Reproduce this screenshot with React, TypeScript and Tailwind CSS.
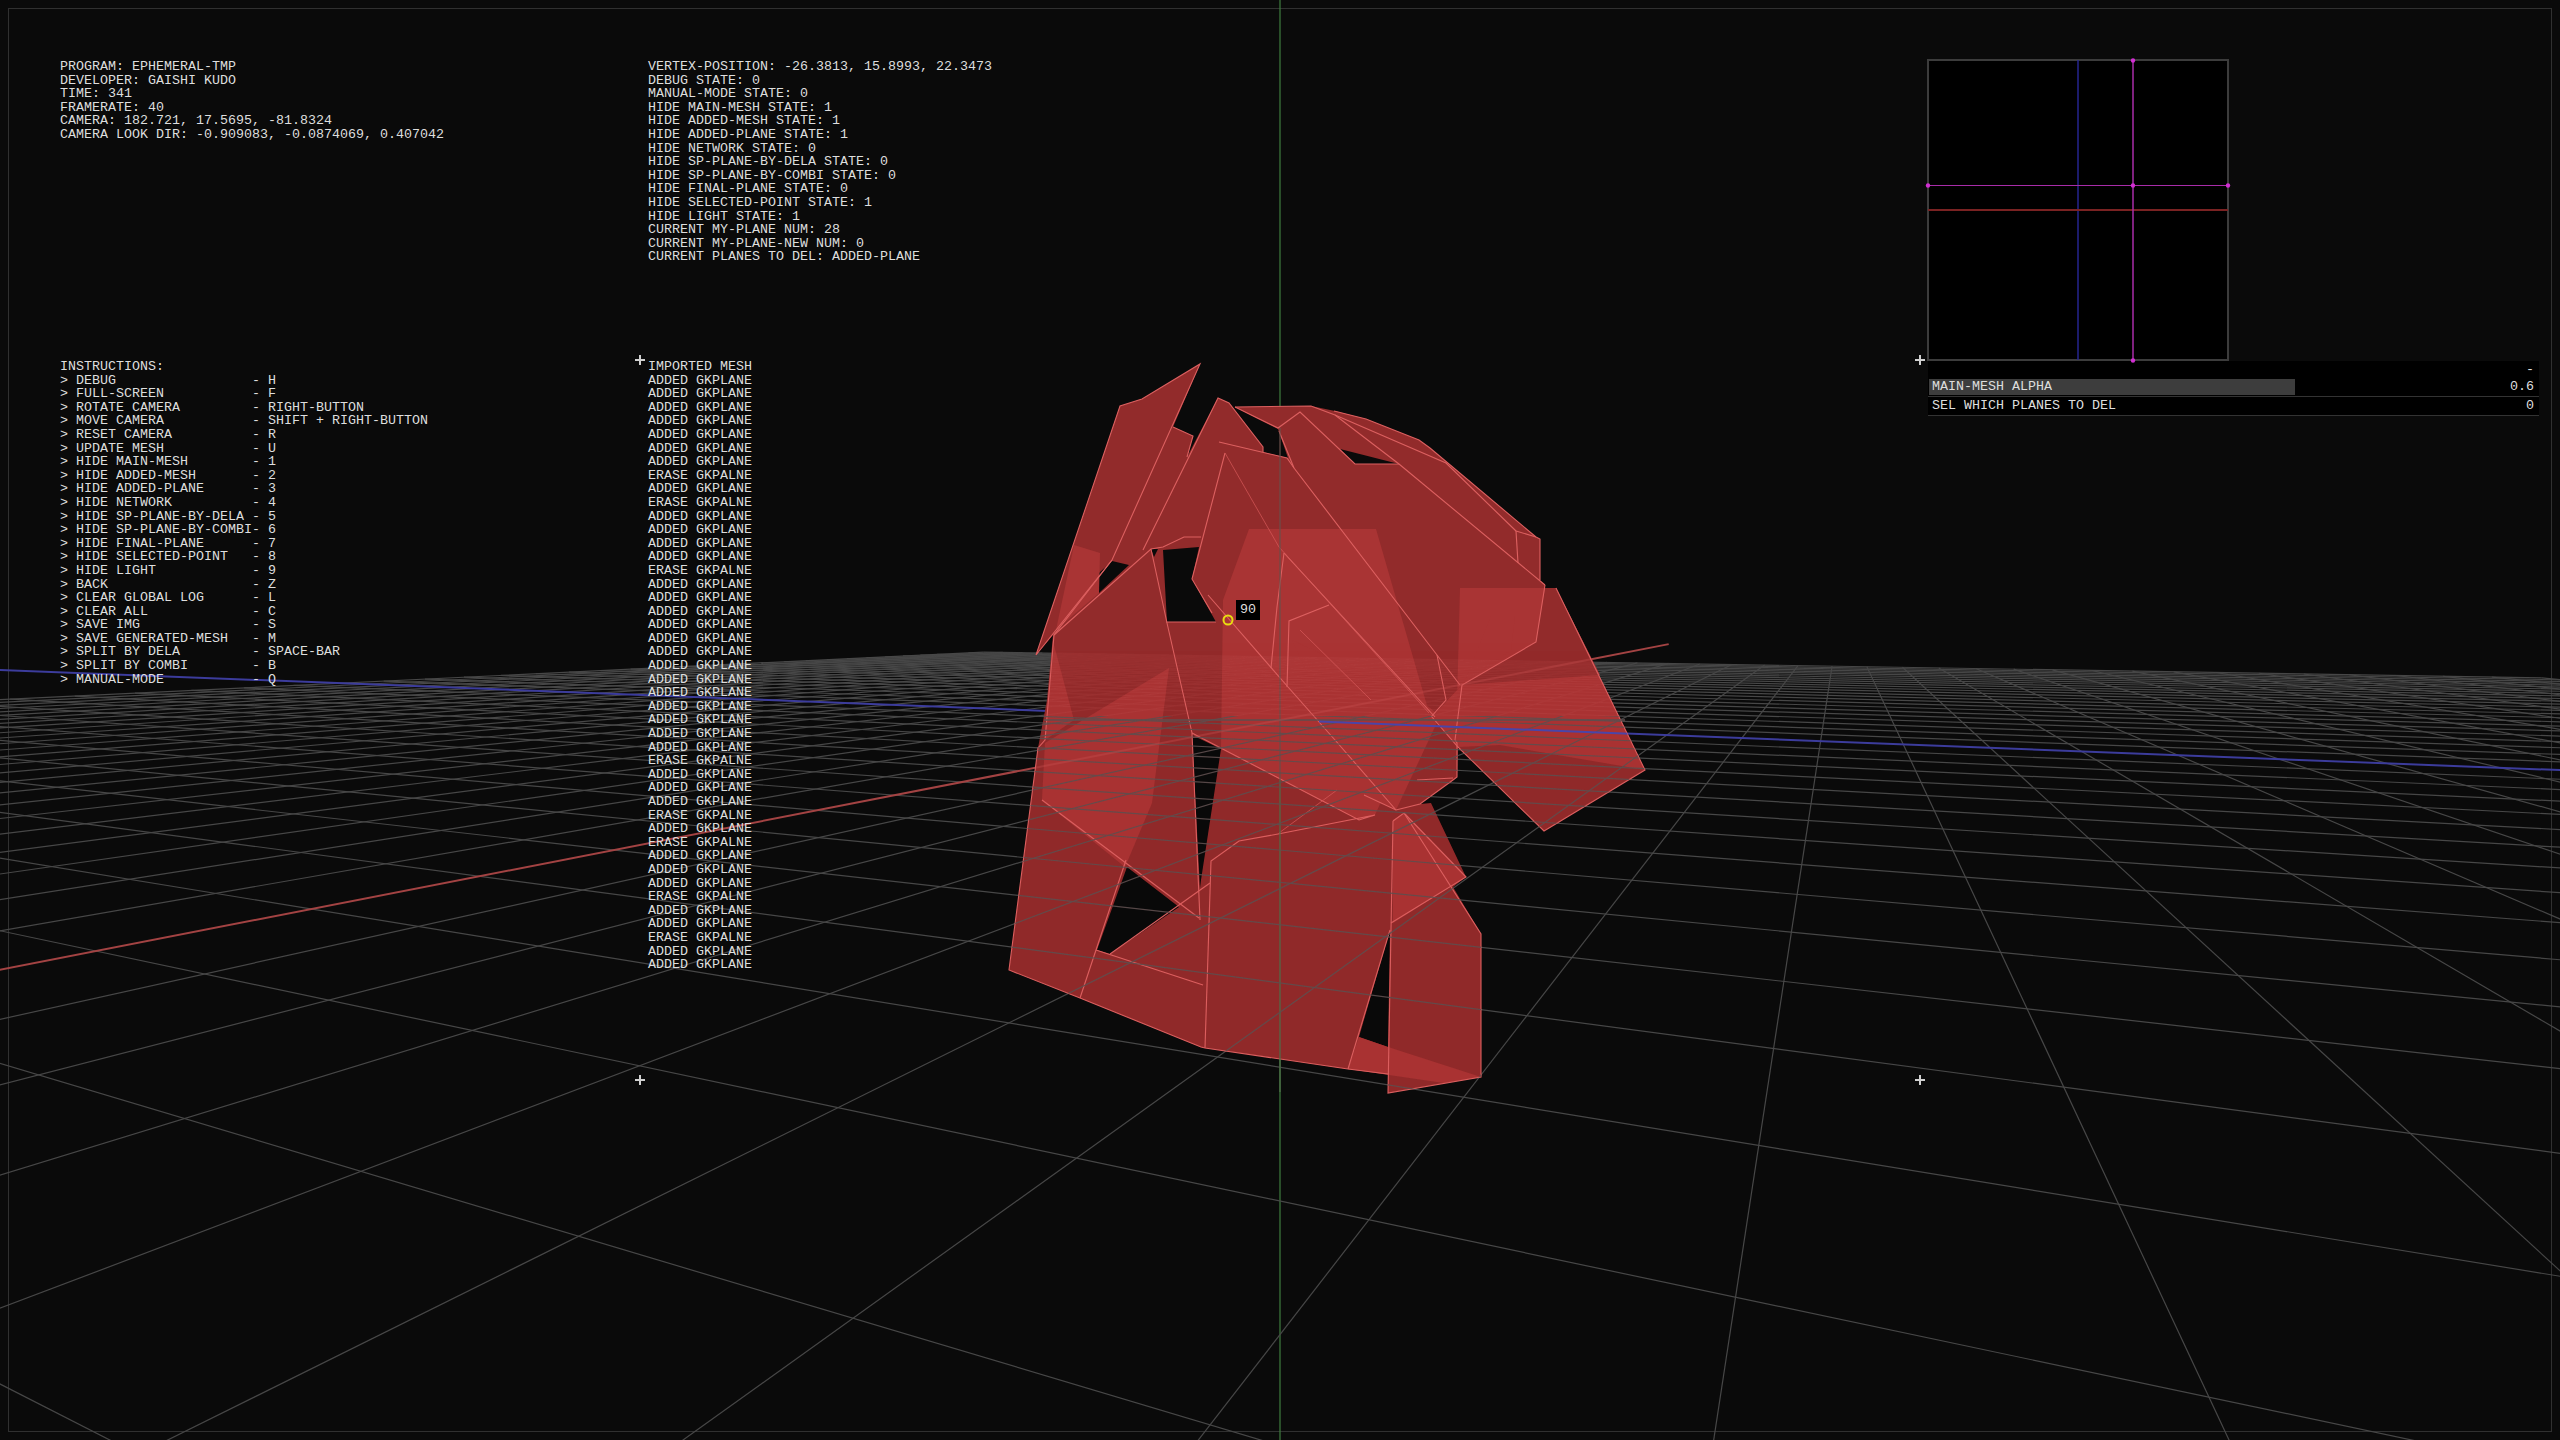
// viewer screen for the ephemeral-tmp mesh tool
const FONT = "font-['Liberation_Mono',monospace]";

const debugInfo = [
  'PROGRAM: EPHEMERAL-TMP',
  'DEVELOPER: GAISHI KUDO',
  'TIME: 341',
  'FRAMERATE: 40',
  'CAMERA: 182.721, 17.5695, -81.8324',
  'CAMERA LOOK DIR: -0.909083, -0.0874069, 0.407042',
];

const stateInfo = [
  'VERTEX-POSITION: -26.3813, 15.8993, 22.3473',
  'DEBUG STATE: 0',
  'MANUAL-MODE STATE: 0',
  'HIDE MAIN-MESH STATE: 1',
  'HIDE ADDED-MESH STATE: 1',
  'HIDE ADDED-PLANE STATE: 1',
  'HIDE NETWORK STATE: 0',
  'HIDE SP-PLANE-BY-DELA STATE: 0',
  'HIDE SP-PLANE-BY-COMBI STATE: 0',
  'HIDE FINAL-PLANE STATE: 0',
  'HIDE SELECTED-POINT STATE: 1',
  'HIDE LIGHT STATE: 1',
  'CURRENT MY-PLANE NUM: 28',
  'CURRENT MY-PLANE-NEW NUM: 0',
  'CURRENT PLANES TO DEL: ADDED-PLANE',
];

const instructions: [string, string][] = [
  ['DEBUG', 'H'],
  ['FULL-SCREEN', 'F'],
  ['ROTATE CAMERA', 'RIGHT-BUTTON'],
  ['MOVE CAMERA', 'SHIFT + RIGHT-BUTTON'],
  ['RESET CAMERA', 'R'],
  ['UPDATE MESH', 'U'],
  ['HIDE MAIN-MESH', '1'],
  ['HIDE ADDED-MESH', '2'],
  ['HIDE ADDED-PLANE', '3'],
  ['HIDE NETWORK', '4'],
  ['HIDE SP-PLANE-BY-DELA', '5'],
  ['HIDE SP-PLANE-BY-COMBI', '6'],
  ['HIDE FINAL-PLANE', '7'],
  ['HIDE SELECTED-POINT', '8'],
  ['HIDE LIGHT', '9'],
  ['BACK', 'Z'],
  ['CLEAR GLOBAL LOG', 'L'],
  ['CLEAR ALL', 'C'],
  ['SAVE IMG', 'S'],
  ['SAVE GENERATED-MESH', 'M'],
  ['SPLIT BY DELA', 'SPACE-BAR'],
  ['SPLIT BY COMBI', 'B'],
  ['MANUAL-MODE', 'Q'],
];

const erased = [8, 10, 15, 29, 33, 35, 39, 42];
const logLines = Array.from({ length: 45 }, (_, i) => {
  if (i === 0) return 'IMPORTED MESH';
  return erased.includes(i) ? 'ERASE GKPALNE' : 'ADDED GKPLANE';
});

// camera values are the ones printed in the debug text
type V3 = [number, number, number];
const cam: V3 = [182.721, 17.5695, -81.8324];
const fwd: V3 = [-0.909083, -0.0874069, 0.407042];
const rl = Math.hypot(fwd[2], fwd[0]);
const right: V3 = [-fwd[2] / rl, 0, fwd[0] / rl];
const up: V3 = [
  right[1] * fwd[2] - right[2] * fwd[1],
  right[2] * fwd[0] - right[0] * fwd[2],
  right[0] * fwd[1] - right[1] * fwd[0],
];
const FOCAL = 720 / Math.tan(Math.PI / 6);
const dot = (a: V3, b: V3) => a[0] * b[0] + a[1] * b[1] + a[2] * b[2];
const sub = (a: V3, b: V3): V3 => [a[0] - b[0], a[1] - b[1], a[2] - b[2]];

function segment(a: V3, b: V3) {
  let pa = sub(a, cam);
  let pb = sub(b, cam);
  const da = dot(pa, fwd);
  const db = dot(pb, fwd);
  const near = 1;
  if (da < near && db < near) return null;
  const cut = (p: V3, q: V3, dp: number, dq: number): V3 => {
    const t = (near - dp) / (dq - dp);
    return [p[0] + (q[0] - p[0]) * t, p[1] + (q[1] - p[1]) * t, p[2] + (q[2] - p[2]) * t];
  };
  if (da < near) pa = cut(pa, pb, da, db);
  if (db < near) pb = cut(pb, pa, db, da);
  const proj = (p: V3) => {
    const d = dot(p, fwd);
    return [1280 + (FOCAL * dot(p, right)) / d, 720 - (FOCAL * dot(p, up)) / d];
  };
  const [x1, y1] = proj(pa);
  const [x2, y2] = proj(pb);
  return { x1, y1, x2, y2 };
}

const STEP = 10;
const SIZE = 250;
const gridLines: { x1: number; y1: number; x2: number; y2: number }[] = [];
for (let v = -SIZE; v <= SIZE; v += STEP) {
  if (v === 0) continue;
  const s1 = segment([v, 0, -SIZE], [v, 0, SIZE]);
  const s2 = segment([-SIZE, 0, v], [SIZE, 0, v]);
  if (s1) gridLines.push(s1);
  if (s2) gridLines.push(s2);
}
const axisX = segment([-500, 0, 0], [500, 0, 0])!;
const axisZ = segment([0, 0, -500], [0, 0, 500])!;

const silhouette =
  '1036,655 1120,406 1142,399 1200,364 1173,427 1193,436 1187,457 1218,398 1229,403 1263,447 1263,452 1277,430 1235,407 1311,406 1335,411 1366,419 1419,440 1430,448 1536,537 1540,539 1540,580 1545,585 1545,588 1556,588 1645,770 1544,831 1458,747 1457,777 1453,780 1420,804 1431,803 1466,877 1453,887 1481,934 1481,1077 1388,1093 1388,1074 1348,1069 1205,1048 1201,1047 1080,998 1009,970 1038,748 1047,700 1053,635';

const holes = [
  '1163,550 1199,547 1192,579 1216,622 1167,622',
  '1112,561 1129,565 1099,593 1099,573',
  '1235,408 1278,429 1288,458 1263,452 1263,447',
  '1340,449 1355,464 1399,464',
  '1192,735 1221,749 1201,880 1200,888',
  '1127,867 1179,907 1110,954 1097,950',
  '1390,930 1359,1037 1388,1047',
  '1151,549 1158,549 1154,557',
];

const lightFaces = [
  '1249,529 1376,529 1430,716 1400,760 1375,815 1359,820 1221,749 1223,600',
  '1460,588 1545,588 1536,642 1462,685 1432,717 1456,740',
  '1491,616 1515,616 1511,650 1464,683',
  '1556,588 1645,770 1500,745 1458,747 1432,717 1462,685 1600,675',
  '1169,668 1152,803 1125,867 1042,800 1045,743',
  '1054,645 1074,720 1045,740',
  '1074,545 1100,553 1099,593 1056,630',
  '1404,813 1466,877 1393,923 1393,820',
  '1359,1037 1388,1047 1481,1077 1444,1083 1348,1069',
  '1292,640 1420,700 1440,716 1396,810 1364,795',
];

const edges = [
  '1036,655 1120,406 1142,399 1200,364 1112,560 1036,655',
  '1143,550 1218,398 1229,403 1263,447 1263,452',
  '1173,427 1193,436 1187,457',
  '1219,442 1287,458 1294,468 1437,655 1460,685',
  '1225,453 1192,579 1212,613',
  '1235,407 1311,406 1335,415 1399,464 1545,585',
  '1334,411 1366,419 1419,440 1430,448 1536,537 1540,539 1540,580',
  '1235,407 1278,428 1300,412 1355,464 1399,464',
  '1279,431 1294,468',
  '1516,531 1518,563',
  '1516,531 1536,537',
  '1335,415 1446,463 1516,531',
  '1054,635 1151,549 1163,547 1184,537 1201,537',
  '1151,549 1167,623 1192,733 1200,920',
  '1112,560 1054,635 1045,740 1038,748 1009,970 1080,998 1201,1047 1205,1048 1348,1069 1388,1074',
  '1545,585 1536,642 1462,685 1455,740 1457,743 1457,777 1453,780 1420,804 1396,810 1364,795',
  '1556,588 1645,770 1544,831 1458,747 1432,717',
  '1208,595 1288,687 1335,740 1396,810',
  '1284,553 1435,717',
  '1284,553 1277,607 1271,668',
  '1329,605 1289,621 1287,687',
  '1437,655 1446,700 1431,717',
  '1192,733 1359,820 1375,815 1278,834 1239,841 1211,861 1205,1048',
  '1393,821 1388,1093 1481,1077 1481,934 1404,813 1393,821',
  '1404,813 1466,877 1391,923',
  '1390,930 1348,1069',
  '1042,800 1199,918',
  '1126,860 1080,998',
  '1096,950 1203,985',
  '1110,954 1210,883',
  '1417,780 1453,778',
  '1166,622 1216,622',
];

const thinEdges = ['1225,453 1279,547 1429,713', '1279,833 1337,790', '1300,630 1371,700'];

const crosses = [
  [640, 360],
  [1920, 360],
  [640, 1080],
  [1920, 1080],
];

const previewDots = [
  [2133, 60],
  [2133, 185],
  [2133, 360],
  [1928, 185],
  [2228, 185],
];

const GridLines = ({ stroke, opacity }: { stroke: string; opacity: number }) => (
  <g stroke={stroke} strokeWidth={1.2} opacity={opacity}>
    {gridLines.map((l, i) => (
      <line key={i} {...l} />
    ))}
  </g>
);

// gl-style scene drawing: grid, axes, mesh, hud markers
const Scene = () => (
  <svg className="absolute inset-0" width={2560} height={1440} viewBox="0 0 2560 1440">
    <defs>
      <clipPath id="mesh-clip">
        <polygon points={silhouette} />
      </clipPath>
      <clipPath id="far-band">
        <rect x={0} y={650} width={2560} height={66} />
      </clipPath>
      <clipPath id="near-band">
        <rect x={0} y={716} width={2560} height={724} />
      </clipPath>
      <clipPath id="blue-over">
        <rect x={1319} y={650} width={400} height={120} />
      </clipPath>
    </defs>

    <rect x={8.5} y={8.5} width={2543} height={1423} fill="none" stroke="#303030" strokeWidth={1} />
    <line x1={1280} y1={0} x2={1280} y2={1440} stroke="#3f7d3f" strokeWidth={1.2} />
    <GridLines stroke="#474747" opacity={1} />
    <line {...axisX} stroke="#a34343" strokeWidth={2} />
    <line {...axisZ} stroke="#3c3c9c" strokeWidth={2} />

    <polygon points={silhouette} fill="#922b2b" />
    {holes.map((p) => (
      <polygon key={p} points={p} fill="#0a0a0a" />
    ))}
    {lightFaces.map((p) => (
      <polygon key={p} points={p} fill="#a93434" />
    ))}
    {edges.map((p) => (
      <polyline key={p} points={p} fill="none" stroke="#dc6060" strokeWidth={1.1} />
    ))}
    {thinEdges.map((p) => (
      <polyline key={p} points={p} fill="none" stroke="#d85a5a" strokeWidth={0.7} />
    ))}

    <line x1={1280} y1={428} x2={1280} y2={780} stroke="#6b4f4a" strokeWidth={1.2} />
    <line x1={1280} y1={780} x2={1280} y2={1092} stroke="#4f7048" strokeWidth={1.2} />
    <line x1={1044} y1={720} x2={1625} y2={720} stroke="#5f4f4f" strokeWidth={1.5} />

    <g clipPath="url(#mesh-clip)">
      <g clipPath="url(#far-band)">
        <GridLines stroke="#d06060" opacity={0.12} />
      </g>
      <g clipPath="url(#near-band)">
        <GridLines stroke="#5f4f4f" opacity={0.9} />
      </g>
      <line {...axisX} stroke="#c95050" strokeWidth={2} opacity={0.35} />
      <g clipPath="url(#blue-over)">
        <line {...axisZ} stroke="#4a45a8" strokeWidth={2} />
      </g>
    </g>

    <circle cx={1228} cy={620} r={4.5} fill="none" stroke="#e8dc10" strokeWidth={2} />

    {crosses.map(([x, y]) => (
      <path key={x + '-' + y} d={`M${x - 5} ${y}H${x + 5}M${x} ${y - 5}V${y + 5}`} stroke="#d0d0d0" strokeWidth={2} />
    ))}
  </svg>
);

const Preview = () => (
  <div className="relative w-[302px] h-[302px] bg-black border-2 border-[#3c3c3c] -ml-px -mt-px">
    <svg className="absolute -left-[2px] -top-[2px] overflow-visible" width={302} height={302} viewBox="1927 59 302 302">
      <line x1={2078} y1={60} x2={2078} y2={360} stroke="#25258f" strokeWidth={1.5} />
      <line x1={1928} y1={210} x2={2228} y2={210} stroke="#7a2222" strokeWidth={2} />
      <line x1={2133} y1={60} x2={2133} y2={360} stroke="#a82ca8" strokeWidth={1.5} />
      <line x1={1928} y1={185.5} x2={2228} y2={185.5} stroke="#a82ca8" strokeWidth={1.2} />
      {previewDots.map(([x, y]) => (
        <circle key={x + '-' + y} cx={x} cy={y + 0.5} r={2.2} fill="#d22fd2" />
      ))}
    </svg>
  </div>
);

const GuiPanel = () => (
  <div className="w-[611px] bg-black h-[55px] flex flex-col">
    <div className="h-[18px] flex justify-end items-center pr-[5px]">-</div>
    <div className="relative h-[18px] border-b border-[#333333] pl-[1px]">
      <div className="h-[16px] w-[366px] bg-[#3d3d3d]" />
      <div className="absolute inset-x-0 top-0 h-[16px] flex justify-between items-center pl-[4px] pr-[5px]">
        <span>MAIN-MESH ALPHA</span>
        <span>0.6</span>
      </div>
    </div>
    <div className="h-[19px] border-b border-[#333333] flex justify-between items-center pl-[4px] pr-[5px]">
      <span>SEL WHICH PLANES TO DEL</span>
      <span>0</span>
    </div>
  </div>
);

const TextBlock = ({ lines }: { lines: string[] }) => (
  <div className="whitespace-pre">
    {lines.map((line, i) => (
      <div key={i}>{line}</div>
    ))}
  </div>
);

export default function App() {
  const instructionLines = [
    'INSTRUCTIONS:',
    ...instructions.map(([name, key]) => `> ${name.padEnd(22)}- ${key}`),
  ];

  return (
    <div className={`relative w-[2560px] h-[1440px] overflow-hidden bg-[#0a0a0a] text-[#dedede] text-[13.33px] leading-[13.6px] ${FONT}`}>
      <Scene />

      <div className="relative flex pl-[60px] pt-[60px]">
        <div className="w-[588px] flex flex-col">
          <div className="h-[300px]">
            <TextBlock lines={debugInfo} />
          </div>
          <TextBlock lines={instructionLines} />
        </div>

        <div className="w-[1280px] flex flex-col">
          <div className="h-[300px]">
            <TextBlock lines={stateInfo} />
          </div>
          <TextBlock lines={logLines} />
        </div>

        <div className="flex flex-col">
          <Preview />
          <GuiPanel />
        </div>
      </div>

      {/* hovered vertex label */}
      <div className="absolute left-[1236px] top-[600px] w-[24px] h-[20px] bg-black flex items-center justify-center">
        90
      </div>
    </div>
  );
}
